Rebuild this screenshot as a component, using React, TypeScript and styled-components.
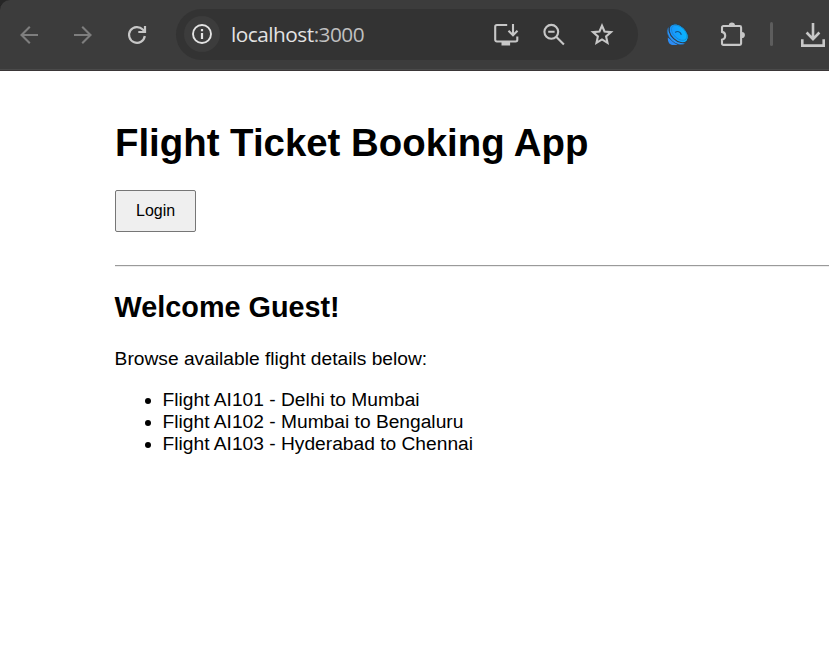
import React from 'react';
import styled, { createGlobalStyle } from 'styled-components';

const GlobalStyle = createGlobalStyle`
  html, body { margin: 0; padding: 0; background: #fff; overflow: hidden; }
  * { box-sizing: border-box; }
`;

const Window = styled.div`
  width: 100%;
  height: 664px;
  overflow: hidden;
  background: #fff;
`;

const TopStrip = styled.div`
  background: #262626;
`;

const Toolbar = styled.header`
  display: flex;
  align-items: center;
  height: 71px;
  padding: 0 0 2px 16px;
  background: #3c3c3c;
  border-top-left-radius: 10px;
  box-shadow: inset 0 -1px 0 #3a3637, inset 0 -2px 0 #4a4a4a;
`;

const IconButton = styled.button<{ $gap?: number; $color?: string }>`
  display: flex;
  flex: none;
  width: 26px;
  height: 26px;
  margin: 0 ${(p) => p.$gap ?? 0}px 1px 0;
  padding: 0;
  border: 0;
  background: none;
  color: ${(p) => p.$color ?? '#c7c7c7'};

  svg {
    width: 26px;
    height: 26px;
    overflow: visible;
  }
`;

const AddressBar = styled.div`
  display: flex;
  flex: none;
  align-items: center;
  width: 462px;
  height: 51px;
  margin-right: 26px;
  padding: 0 23px 0 8px;
  border-radius: 26px;
  background: #333;
`;

const SiteInfo = styled.span`
  display: flex;
  flex: none;
  align-items: center;
  justify-content: center;
  width: 36px;
  height: 36px;
  margin: 0 11px 1px 0;
  border-radius: 50%;
  background: #3c3c3c;
  color: #e3e3e3;
`;

const Url = styled.span`
  flex: 1;
  padding-bottom: 2px;
  font: 20.8px/28px 'Open Sans', 'Noto Sans', sans-serif;
  letter-spacing: -0.5px;
  color: #e3e3e3;
  white-space: nowrap;
`;

const Port = styled.span`
  color: #c0c0c0;
`;

const Divider = styled.span`
  flex: none;
  width: 3px;
  height: 24px;
  margin: 0 27px 1px 0;
  border-radius: 2px;
  background: #5d5d5d;
`;

const Page = styled.main`
  padding: 50px 0 0 114.6px;
  font: 19.2px/22px 'Liberation Sans', Arial, sans-serif;
  color: #000;
`;

const Title = styled.h1`
  margin: 0 0 25px;
  font-size: 38.4px;
  line-height: 44px;
  font-weight: 700;
  text-indent: 0.4px;
`;

const LoginButton = styled.button`
  display: block;
  width: 81px;
  height: 42px;
  margin: 0 0 33px;
  padding: 0 0 0 1px;
  border: 1px solid #767676;
  border-radius: 2px;
  background: #efefef;
  color: #000;
  font: 16px/18px 'Liberation Sans', Arial, sans-serif;
`;

const Rule = styled.hr`
  height: 2px;
  margin: 0 0 24px;
  border: 0;
  border-top: 1px solid #9a9a9a;
  border-bottom: 1px solid #ededed;
`;

const Welcome = styled.h2`
  margin: 0 0 24px;
  font-size: 28.8px;
  line-height: 33px;
  font-weight: 700;
`;

const Intro = styled.p`
  margin: 0 0 19px;
`;

const FlightList = styled.ul`
  margin: 0;
  padding-left: 48px;
`;

const flights = [
  'Flight AI101 - Delhi to Mumbai',
  'Flight AI102 - Mumbai to Bengaluru',
  'Flight AI103 - Hyderabad to Chennai',
];

const line = { fill: 'none', stroke: 'currentColor' } as const;

const BackIcon = () => (
  <svg viewBox="0 0 26 26" {...line} strokeWidth="2.1">
    <path d="M22 14H5.6M13.8 5.7 5.500 14l8.300 8.300" />
  </svg>
);

const ForwardIcon = () => (
  <svg viewBox="0 0 26 26" {...line} strokeWidth="2.1">
    <path d="M5 14h16.400M13.200 5.700l8.300 8.300-8.300 8.300" />
  </svg>
);

const ReloadIcon = () => (
  <svg viewBox="0 0 26 26" {...line} strokeWidth="2.2">
    <path d="M21.800 15A7.900 7.900 0 1 1 19.800 8.600L22 10.800" />
    <path d="M22 5v6h-6.700" />
  </svg>
);

const InfoIcon = () => (
  <svg width="22" height="22" viewBox="0 0 22 22" {...line} strokeWidth="1.9">
    <circle cx="11" cy="11" r="9" />
    <path d="M11 10v6M11 6v2.200" strokeWidth="2.2" />
  </svg>
);

const InstallIcon = () => (
  <svg viewBox="0 0 26 26" {...line} strokeWidth="2.1">
    <path d="M14.2 4H3.9a1.7 1.7 0 0 0-1.7 1.7v13.1a1.7 1.7 0 0 0 1.7 1.7h18.7a1.7 1.7 0 0 0 1.7-1.7v-3.3" />
    <path d="M20 3v11M15.5 9.800l4.500 4.400 4.500-4.400" />
    <path d="M8.500 20.500h8.600v4H8.500z" fill="currentColor" stroke="none" />
  </svg>
);

const ZoomOutIcon = () => (
  <svg viewBox="0 0 26 26" {...line} strokeWidth="2.1">
    <circle cx="10.3" cy="10.8" r="6.9" />
    <path d="M7.200 10.800h6.400M15.200 15.800l7.700 7.700" />
  </svg>
);

const StarIcon = () => (
  <svg viewBox="0 0 26 26" {...line} strokeWidth="2.1">
    <path d="m13 4.600 2.500 5.900 6.500.6-4.900 4.300 1.400 6.400-5.500-3.400-5.500 3.400 1.400-6.400L4 11.100l6.500-.6z" />
  </svg>
);

const DishIcon = () => (
  <svg viewBox="0 0 26 26" fill="none">
    <defs>
      <linearGradient id="dish" x1="0" y1="1" x2="1" y2="0">
        <stop offset="0" stopColor="#2388ff" />
        <stop offset="1" stopColor="#00c2ff" />
      </linearGradient>
    </defs>
    <path d="M3.800 16.500c-.3 5 2 7.500 5.500 7.500h4.500z" fill="#2b8cf5" />
    <ellipse cx="12.700" cy="14.300" rx="11.400" ry="7.300" transform="rotate(44 12.700 14.300)" fill="#2a96fb" stroke="#2c4a68" strokeWidth="0.6" />
    <ellipse cx="14.700" cy="12.300" rx="11.300" ry="7.400" transform="rotate(43 14.700 12.300)" fill="url(#dish)" stroke="#303b45" strokeWidth="1.1" />
    <ellipse cx="15.200" cy="11.800" rx="9.300" ry="5.600" transform="rotate(43 15.200 11.800)" stroke="#1688cf" strokeWidth="0.8" />
    <path d="M11.200 11.500c2.200-2 5.200-.8 6.200 2.300" stroke="#14568a" strokeWidth="1.2" />
  </svg>
);

const PuzzleIcon = () => (
  <svg viewBox="0 0 26 26" {...line} strokeWidth="2.1">
    <path d="M5.400 5h15.300a1.400 1.400 0 0 1 1.400 1.400v16.100a1.400 1.400 0 0 1-1.400 1.400H4.400A1.400 1.400 0 0 1 3 22.500v-3.800c4.300-1 4.300-7 0-7.800V6.400A1.400 1.400 0 0 1 4.400 5h1" />
    <path d="M9.800 4.500a3.100 3.100 0 0 1 6.200 0zM22.800 10.900a3.100 3.100 0 0 1 0 6.200z" fill="currentColor" stroke="none" />
  </svg>
);

const DownloadIcon = () => (
  <svg viewBox="0 0 26 26" {...line} strokeWidth="2.6">
    <path d="M13 2v16.400M6.600 11.500l6.400 6.600 6.400-6.600" />
    <path d="M2.300 18.200v6.400h21.400v-6.400" />
  </svg>
);

export default function App() {
  return (
    <Window>
      <GlobalStyle />
      <TopStrip>
        <Toolbar>
          <IconButton aria-label="Back" $gap={27} $color="#7e7e7e"><BackIcon /></IconButton>
          <IconButton aria-label="Forward" $gap={28} $color="#7e7e7e"><ForwardIcon /></IconButton>
          <IconButton aria-label="Reload" $gap={27}><ReloadIcon /></IconButton>
          <AddressBar>
            <SiteInfo><InfoIcon /></SiteInfo>
            <Url>localhost<Port>:3000</Port></Url>
            <IconButton aria-label="Install" $gap={22}><InstallIcon /></IconButton>
            <IconButton aria-label="Zoom out" $gap={22}><ZoomOutIcon /></IconButton>
            <IconButton aria-label="Bookmark"><StarIcon /></IconButton>
          </AddressBar>
          <IconButton aria-label="Dish extension" $gap={29}><DishIcon /></IconButton>
          <IconButton aria-label="Extensions" $gap={25}><PuzzleIcon /></IconButton>
          <Divider />
          <IconButton aria-label="Downloads"><DownloadIcon /></IconButton>
        </Toolbar>
      </TopStrip>
      <Page>
        <Title>Flight Ticket Booking App</Title>
        <LoginButton>Login</LoginButton>
        <Rule />
        <Welcome>Welcome Guest!</Welcome>
        <Intro>Browse available flight details below:</Intro>
        <FlightList>
          {flights.map((flight) => <li key={flight}>{flight}</li>)}
        </FlightList>
      </Page>
    </Window>
  );
}
